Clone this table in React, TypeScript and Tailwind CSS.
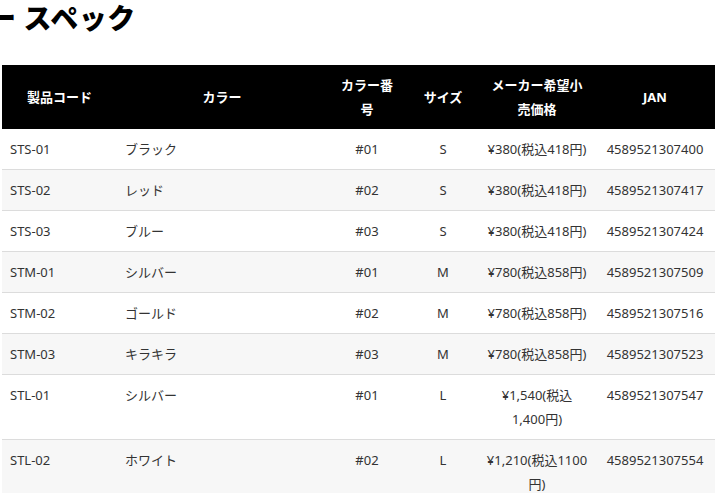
import React from 'react';

const ROWS = [
    { code: 'STS-01', color: 'ブラック', no: '#01', size: 'S', price: ['¥380(税込418円)'], jan: '4589521307400' },
    { code: 'STS-02', color: 'レッド', no: '#02', size: 'S', price: ['¥380(税込418円)'], jan: '4589521307417' },
    { code: 'STS-03', color: 'ブルー', no: '#03', size: 'S', price: ['¥380(税込418円)'], jan: '4589521307424' },
    { code: 'STM-01', color: 'シルバー', no: '#01', size: 'M', price: ['¥780(税込858円)'], jan: '4589521307509' },
    { code: 'STM-02', color: 'ゴールド', no: '#02', size: 'M', price: ['¥780(税込858円)'], jan: '4589521307516' },
    { code: 'STM-03', color: 'キラキラ', no: '#03', size: 'M', price: ['¥780(税込858円)'], jan: '4589521307523' },
    { code: 'STL-01', color: 'シルバー', no: '#01', size: 'L', price: ['¥1,540(税込', '1,400円)'], jan: '4589521307547' },
    { code: 'STL-02', color: 'ホワイト', no: '#02', size: 'L', price: ['¥1,210(税込1100', '円)'], jan: '4589521307554' },
];

const App: React.FC = () => {
    return (
        <div className="w-[717px] h-[493px] overflow-hidden bg-white text-[#333] font-['Noto_Sans','Noto_Sans_CJK_JP',sans-serif]">
            <h2 className="ml-[-12px] text-[28px] leading-[34px] font-black text-black tracking-[0.02em] font-['Noto_Sans_CJK_JP',sans-serif] whitespace-pre">
                ー スペック
            </h2>

            <table className="mt-[31px] ml-[2px] w-[713px] table-fixed border-collapse text-[13px] leading-6">
                <colgroup>
                    <col className="w-[115px]" />
                    <col className="w-[210px]" />
                    <col className="w-[80px]" />
                    <col className="w-[72px]" />
                    <col className="w-[116px]" />
                    <col className="w-[120px]" />
                </colgroup>
                <thead className="bg-black text-white">
                    <tr className="h-[64px]">
                        <th className="px-2 py-2 font-bold">製品コード</th>
                        <th className="px-2 py-2 font-bold">カラー</th>
                        <th className="px-2 py-2 font-bold">カラー番号</th>
                        <th className="px-2 py-2 font-bold">サイズ</th>
                        <th className="px-2 py-2 font-bold">メーカー希望小売価格</th>
                        <th className="px-2 py-2 font-bold">JAN</th>
                    </tr>
                </thead>
                <tbody>
                    {ROWS.map((row, i) => (
                        <tr key={row.code} className={`border-b border-[#dcdcdc] ${i % 2 === 1 ? 'bg-[#f7f7f7]' : 'bg-white'}`}>
                            <td className="px-2 py-2 align-top text-left">{row.code}</td>
                            <td className="px-2 py-2 align-top text-left">{row.color}</td>
                            <td className="px-2 py-2 align-top text-center">{row.no}</td>
                            <td className="px-2 py-2 align-top text-center">{row.size}</td>
                            <td className="px-1 py-2 align-top text-center whitespace-nowrap">
                                {row.price.map(line => <div key={line}>{line}</div>)}
                            </td>
                            <td className="px-2 py-2 align-top text-center">{row.jan}</td>
                        </tr>
                    ))}
                </tbody>
            </table>
        </div>
    );
};

export default App;
